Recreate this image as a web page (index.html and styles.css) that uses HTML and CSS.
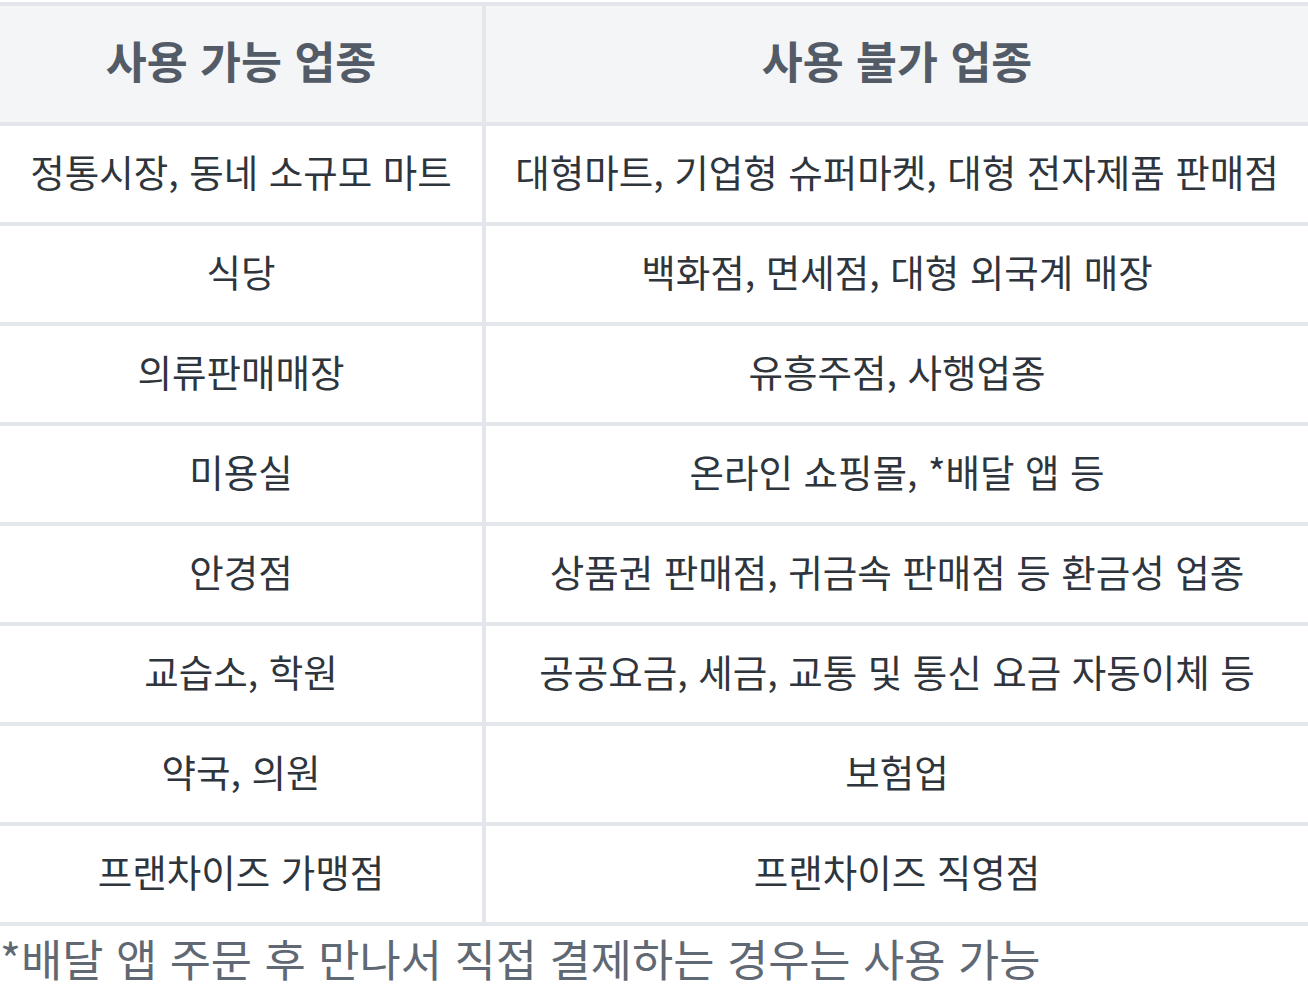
FILE: index.html
```html
<!DOCTYPE html>
<html lang="ko">
<head>
<meta charset="utf-8">
<link rel="stylesheet" href="styles.css">
</head>
<body>
<div class="sheet">
  <div class="grid">
    <div class="cell head">사용 가능 업종</div>
    <div class="cell head">사용 불가 업종</div>
    <div class="cell">정통시장, 동네 소규모 마트</div>
    <div class="cell">대형마트, 기업형 슈퍼마켓, 대형 전자제품 판매점</div>
    <div class="cell">식당</div>
    <div class="cell">백화점, 면세점, 대형 외국계 매장</div>
    <div class="cell">의류판매매장</div>
    <div class="cell">유흥주점, 사행업종</div>
    <div class="cell">미용실</div>
    <div class="cell">온라인 쇼핑몰, *배달 앱 등</div>
    <div class="cell">안경점</div>
    <div class="cell">상품권 판매점, 귀금속 판매점 등 환금성 업종</div>
    <div class="cell">교습소, 학원</div>
    <div class="cell">공공요금, 세금, 교통 및 통신 요금 자동이체 등</div>
    <div class="cell">약국, 의원</div>
    <div class="cell">보험업</div>
    <div class="cell">프랜차이즈 가맹점</div>
    <div class="cell">프랜차이즈 직영점</div>
  </div>
  <p class="note">*배달 앱 주문 후 만나서 직접 결제하는 경우는 사용 가능</p>
</div>
</body>
</html>
```

FILE: styles.css
```css
html, body {
  margin: 0;
  padding: 0;
  background: #ffffff;
}
body {
  font-family: "Noto Sans CJK KR", "Noto Sans", sans-serif;
  overflow: hidden;
}
.sheet {
  padding-top: 2px;
  width: 1308px;
}
.grid {
  display: grid;
  grid-template-columns: 482px 1fr;
  grid-template-rows: 116px repeat(8, 96px);
  gap: 4px;
  padding: 4px 0;
  background: #e3e6ea;
}
.cell {
  background: #ffffff;
  display: flex;
  align-items: center;
  justify-content: center;
  padding-bottom: 7px;
  box-sizing: border-box;
  font-size: 37.5px;
  line-height: 1.2;
  color: #2f353c;
  white-space: nowrap;
}
.cell.head {
  background: #f4f5f7;
  font-size: 44.5px;
  font-weight: 700;
  color: #535b66;
  padding-bottom: 8px;
}
.note {
  margin: 0;
  padding-top: 2px;
  font-size: 44.8px;
  line-height: 60px;
  color: #5f6873;
  white-space: nowrap;
}
```
